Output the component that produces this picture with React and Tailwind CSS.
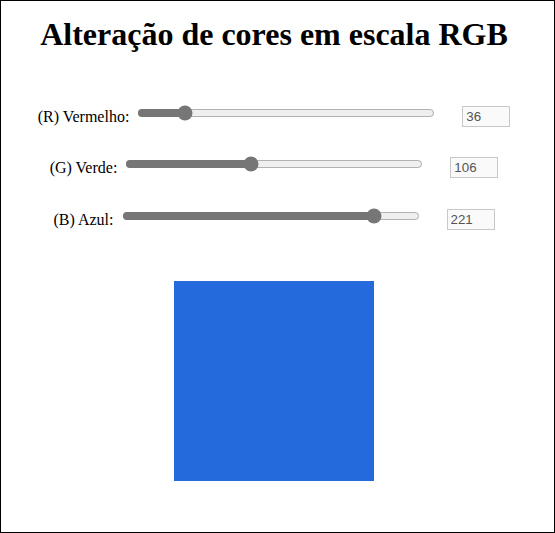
import { useState } from "react";

const serif = { fontFamily: '"Liberation Serif", "Times New Roman", serif' };

const Row = ({ label, value, className }) => {
  return (
    <div className={`flex items-center h-[21px] ${className}`}>
      <label className="text-[16px] text-black mt-[1px]" style={serif}>
        {label}
      </label>
      <input
        type="range"
        min="0"
        max="255"
        value={value}
        onChange={() => {}}
        className="ml-2 w-[298px] mb-[7px] accent-[#767676]"
      />
      <input
        type="text"
        value={value}
        disabled
        readOnly
        className="ml-[27px] w-12 h-[21px] border border-[#c8c8c8] bg-[#fafafa] px-[3px] text-[13.33px] text-[#545454]"
        style={{ fontFamily: '"Liberation Sans", Arial, sans-serif' }}
      />
    </div>
  );
};

export default function App() {
  const [rgb] = useState({ r: 36, g: 106, b: 221 });

  return (
    <div className="w-[555px] h-[533px] border border-black bg-white">
      <div className="flex flex-col items-center pr-[7px]">
        <h1
          className="mt-[15px] text-[32px] font-bold leading-[37px] text-black"
          style={serif}
        >
          Alteração de cores em escala RGB
        </h1>
        <Row label="(R) Vermelho:" value={rgb.r} className="mt-[53px]" />
        <Row label="(G) Verde:" value={rgb.g} className="mt-[30px]" />
        <Row label="(B) Azul:" value={rgb.b} className="mt-[31px]" />
        <div
          className="mt-[51px] w-[200px] h-[200px]"
          style={{ backgroundColor: `rgb(${rgb.r}, ${rgb.g}, ${rgb.b})` }}
        />
      </div>
    </div>
  );
}
